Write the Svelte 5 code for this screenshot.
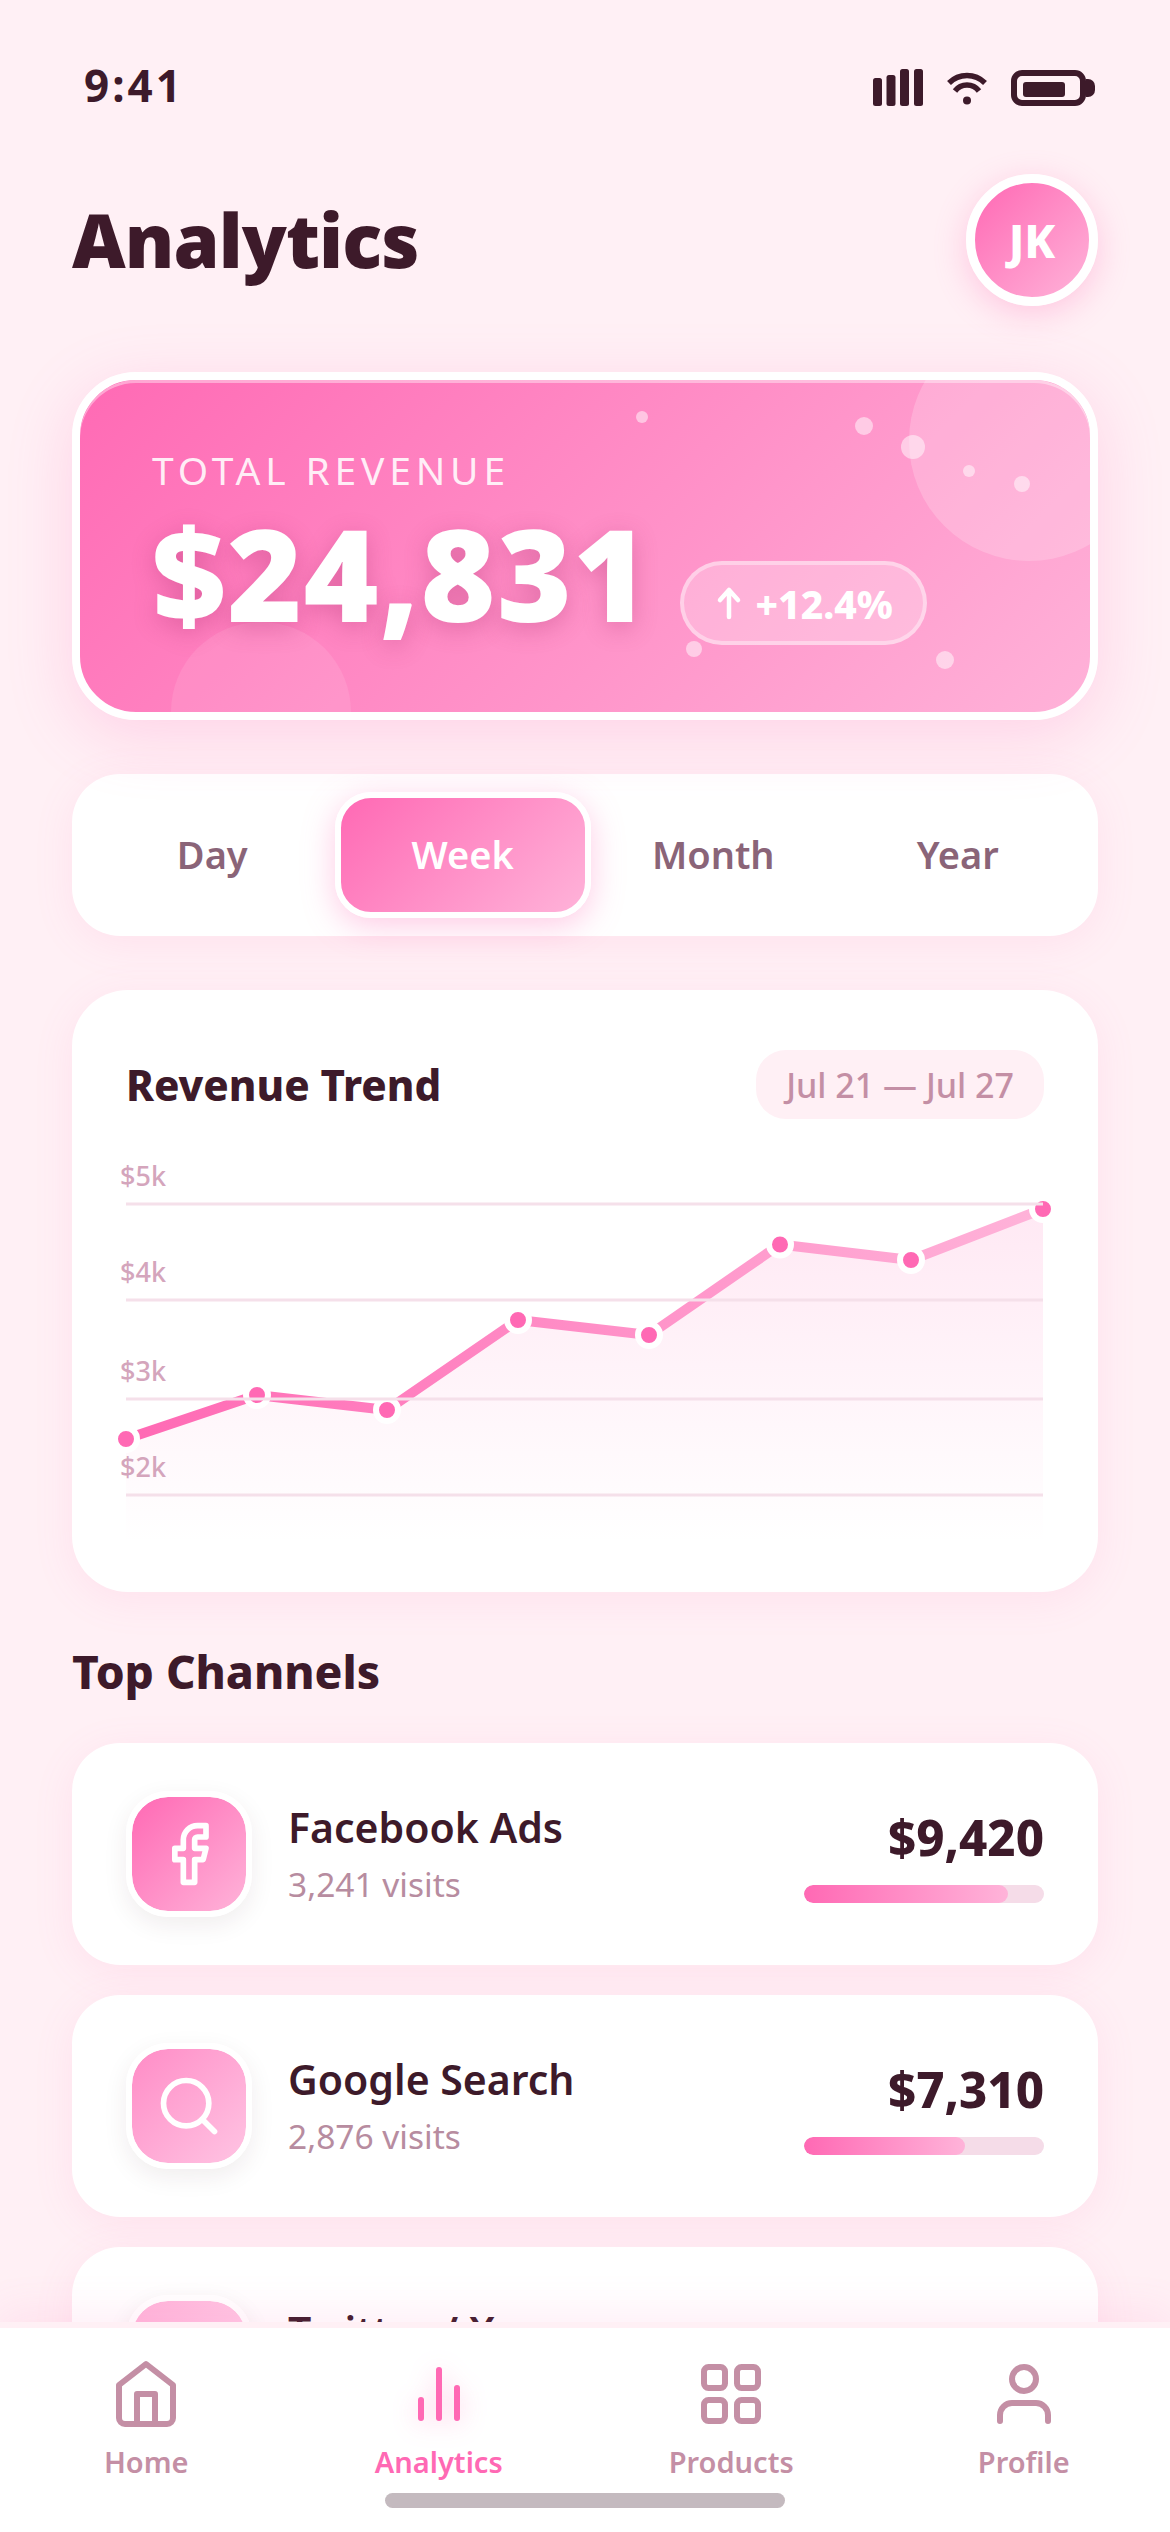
<script>
	const dots = [
		{ x: 642, y: 417, r: 6 },
		{ x: 864, y: 426, r: 9 },
		{ x: 913, y: 447, r: 12 },
		{ x: 969, y: 471, r: 6 },
		{ x: 1022, y: 484, r: 8 },
		{ x: 694, y: 649, r: 8 },
		{ x: 945, y: 660, r: 9 }
	];
	const tabs = ['Day', 'Week', 'Month', 'Year'];
	const points = [
		[0, 279],
		[131, 235],
		[261, 250],
		[392, 160],
		[523, 175],
		[654, 84.5],
		[785, 100],
		[917, 49]
	];
	const gridLines = [
		{ y: 44, label: '$5k' },
		{ y: 140, label: '$4k' },
		{ y: 239, label: '$3k' },
		{ y: 335, label: '$2k' }
	];
	const channels = [
		{ name: 'Facebook Ads', visits: '3,241 visits', amount: '$9,420', share: 85, icon: 'facebook', tone: 'tone-a' },
		{ name: 'Google Search', visits: '2,876 visits', amount: '$7,310', share: 67, icon: 'search', tone: 'tone-b' },
		{ name: 'Twitter / X', visits: '1,954 visits', amount: '$5,102', share: 48, icon: 'twitter', tone: 'tone-c' }
	];
	const navItems = ['Home', 'Analytics', 'Products', 'Profile'];

	const linePath = points.map((p) => p.join(',')).join(' ');
	const areaPath = `0,383 ${linePath} 917,383`;
</script>

<div class="screen">
	<div class="scroll">
		<div class="status">
			<span class="time">9:41</span>
			<div class="status-icons">
				<svg width="50" height="37" viewBox="0 0 50 37" fill="#3d1a2a">
					<rect x="0" y="9" width="9" height="28" rx="2.5" />
					<rect x="13.5" y="6" width="9" height="31" rx="2.5" />
					<rect x="27" y="0" width="9" height="37" rx="2.5" />
					<rect x="41" y="0" width="9" height="37" rx="2.5" />
				</svg>
				<svg width="40" height="34" viewBox="0 0 40 34" fill="none" stroke="#3d1a2a" stroke-width="5.5">
					<path d="M2 12C12 2 28 2 38 12" />
					<path d="M8 20C14 12 26 12 32 20" />
					<circle cx="20" cy="29.5" r="4" fill="#3d1a2a" stroke="none" />
				</svg>
				<svg width="84" height="36" viewBox="0 0 84 36" fill="#3d1a2a">
					<rect x="3" y="3" width="69" height="30" rx="8" fill="none" stroke="#3d1a2a" stroke-width="6" />
					<rect x="12" y="12" width="42" height="15" rx="3" />
					<path d="M75 9h2a7 7 0 0 1 7 7v4a7 7 0 0 1-7 7h-2z" />
				</svg>
			</div>
		</div>

		<header class="page-head">
			<h1>Analytics</h1>
			<div class="avatar">JK</div>
		</header>

		<section class="hero">
			<div class="blob blob-top"></div>
			<div class="blob blob-bottom"></div>
			{#each dots as d}
				<span
					class="dot"
					style="left:{d.x - 80 - d.r}px;top:{d.y - 380 - d.r}px;width:{d.r * 2}px;height:{d.r * 2}px"
				></span>
			{/each}
			<div class="hero-label">TOTAL REVENUE</div>
			<div class="hero-row">
				<span class="hero-value">$24,831</span>
				<span class="badge">
					<svg width="30" height="34" viewBox="0 0 30 34" fill="none" stroke="#fff" stroke-width="4.5" stroke-linecap="round" stroke-linejoin="round">
						<path d="M15 31V4M6 14l9-10 9 10" />
					</svg>
					+12.4%
				</span>
			</div>
		</section>

		<nav class="tabs">
			{#each tabs as tab}
				<div class="tab" class:active={tab === 'Week'}>{tab}</div>
			{/each}
		</nav>

		<section class="chart-card">
			<div class="chart-head">
				<h2>Revenue Trend</h2>
				<span class="range">Jul 21 — Jul 27</span>
			</div>
			<svg class="chart" width="918" height="383" viewBox="0 0 918 383">
				<defs>
					<linearGradient id="lineGrad" x1="0" y1="0" x2="1" y2="0">
						<stop offset="0" stop-color="#ff69b4" />
						<stop offset="1" stop-color="#ffb3d9" />
					</linearGradient>
					<linearGradient id="areaGrad" x1="0" y1="0" x2="0" y2="1">
						<stop offset="0" stop-color="#ff69b4" stop-opacity="0.15" />
						<stop offset="1" stop-color="#ff69b4" stop-opacity="0" />
					</linearGradient>
				</defs>
				<polygon points={areaPath} fill="url(#areaGrad)" />
				<polyline points={linePath} fill="none" stroke="url(#lineGrad)" stroke-width="10" stroke-linejoin="round" />
				{#each points as p}
					<circle cx={p[0]} cy={p[1]} r="11" fill="#ff69b4" stroke="#fff" stroke-width="6" />
				{/each}
				{#each gridLines as g}
					<line x1="0" x2="917" y1={g.y} y2={g.y} stroke="#f5e0ea" stroke-width="3" />
					<text x="-6" y={g.y - 18} class="axis">{g.label}</text>
				{/each}
			</svg>
		</section>

		<h2 class="section-title">Top Channels</h2>

		<div class="channels">
			{#each channels as c}
				<div class="channel">
					<div class="channel-icon {c.tone}">
						<svg width="68" height="68" viewBox="0 0 24 24" fill="none" stroke="#fff" stroke-width="2" stroke-linecap="round" stroke-linejoin="round">
							{#if c.icon === 'facebook'}
								<path d="M18 2h-3a5 5 0 0 0-5 5v3H7v4h3v8h4v-8h3l1-4h-4V7a1 1 0 0 1 1-1h3z" />
							{:else if c.icon === 'search'}
								<circle cx="11" cy="11" r="8" />
								<line x1="21" y1="21" x2="16.65" y2="16.65" />
							{:else}
								<path d="M23 3a10.9 10.9 0 0 1-3 1.5 4.5 4.5 0 0 0-8 3v1A10.7 10.7 0 0 1 3 4s-4 9 5 13a11.600 11.600 0 0 1-7 2c9 5 20 0 20-11.500 0-.3 0-.6-.1-.8A7.700 7.700 0 0 0 23 3z" />
							{/if}
						</svg>
					</div>
					<div class="channel-text">
						<div class="channel-name">{c.name}</div>
						<div class="channel-visits">{c.visits}</div>
					</div>
					<div class="channel-stats">
						<div class="channel-amount">{c.amount}</div>
						<div class="bar"><div class="bar-fill" style="width:{c.share}%"></div></div>
					</div>
				</div>
			{/each}
		</div>
	</div>

	<footer class="bottom-nav">
		{#each navItems as item}
			<div class="nav-item" class:current={item === 'Analytics'}>
				<svg width="72" height="72" viewBox="0 0 24 24" fill="none" stroke="currentColor" stroke-width="2" stroke-linecap="round" stroke-linejoin="round">
					{#if item === 'Home'}
						<path d="M3 9l9-7 9 7v11a2 2 0 0 1-2 2H5a2 2 0 0 1-2-2z" />
						<polyline points="9 22 9 12 15 12 15 22" />
					{:else if item === 'Analytics'}
						<line x1="18" y1="20" x2="18" y2="10" />
						<line x1="12" y1="20" x2="12" y2="4" />
						<line x1="6" y1="20" x2="6" y2="14" />
					{:else if item === 'Products'}
						<rect x="3" y="3" width="7" height="7" rx="1.500" />
						<rect x="14" y="3" width="7" height="7" rx="1.500" />
						<rect x="14" y="14" width="7" height="7" rx="1.500" />
						<rect x="3" y="14" width="7" height="7" rx="1.500" />
					{:else}
						<path d="M20 21v-2a4 4 0 0 0-4-4H8a4 4 0 0 0-4 4v2" />
						<circle cx="12" cy="7" r="4" />
					{/if}
				</svg>
				<span>{item}</span>
			</div>
		{/each}
		<div class="home-bar"></div>
	</footer>
</div>

<style>
	:global(body) {
		margin: 0;
		background: #fff0f5;
	}

	.screen {
		width: 1170px;
		height: 2532px;
		display: flex;
		flex-direction: column;
		overflow: hidden;
		background: #fff0f5;
		color: #3d1a2a;
		font-family: 'Noto Sans', 'Open Sans', sans-serif;
	}

	.scroll {
		flex: 1;
		min-height: 0;
		overflow: hidden;
		padding: 0 72px;
	}

	.status {
		height: 174px;
		display: flex;
		justify-content: space-between;
		align-items: flex-start;
		padding: 60px 3px 0 12px;
		box-sizing: border-box;
	}

	.time {
		font-size: 44px;
		line-height: 50px;
		font-weight: 700;
		letter-spacing: 3px;
	}

	.status-icons {
		display: flex;
		align-items: center;
		gap: 24px;
		margin-top: 9px;
	}

	.page-head {
		height: 132px;
		display: flex;
		justify-content: space-between;
		align-items: center;
	}

	h1 {
		margin: -2px 0 0;
		font-size: 74px;
		font-weight: 900;
		letter-spacing: -0.9px;
	}

	.avatar {
		width: 132px;
		height: 132px;
		box-sizing: border-box;
		border: 9px solid #fff;
		border-radius: 50%;
		background: linear-gradient(135deg, #ff69b4, #ffb3d9);
		box-shadow: 0 8px 32px rgba(255, 105, 180, 0.3);
		color: #fff;
		font-size: 46px;
		font-weight: 800;
		display: flex;
		align-items: center;
		justify-content: center;
	}

	.hero {
		position: relative;
		margin-top: 66px;
		height: 348px;
		box-sizing: border-box;
		padding: 67px 72px 0;
		border: 8px solid #fff;
		border-radius: 64px;
		overflow: hidden;
		background: linear-gradient(135deg, #ff69b4, #ffb3d9);
		background-origin: border-box;
		color: #fff;
		box-shadow: 0 16px 64px rgba(255, 105, 180, 0.22);
	}

	.hero::after {
		content: '';
		position: absolute;
		inset: 0;
		border-radius: 56px;
		box-shadow: inset 0 3px 0 rgba(255, 255, 255, 0.4);
		pointer-events: none;
	}

	.blob {
		position: absolute;
		border-radius: 50%;
		background: rgba(255, 255, 255, 0.2);
	}

	.blob-top {
		width: 240px;
		height: 240px;
		left: 829px;
		top: -59px;
	}

	.blob-bottom {
		width: 180px;
		height: 180px;
		left: 91px;
		top: 242px;
		background: rgba(255, 255, 255, 0.1);
	}

	.dot {
		position: absolute;
		border-radius: 50%;
		background: rgba(255, 255, 255, 0.5);
	}

	.hero-label {
		position: relative;
		font-size: 39px;
		line-height: 46px;
		letter-spacing: 4.8px;
		color: rgba(255, 255, 255, 0.88);
	}

	.hero-row {
		position: relative;
		display: flex;
		align-items: flex-end;
		gap: 30px;
		margin-top: 15px;
	}

	.hero-value {
		font-size: 128px;
		line-height: 130px;
		font-weight: 900;
		letter-spacing: 1.3px;
		text-shadow: 0 6px 24px rgba(160, 40, 100, 0.3);
	}

	.badge {
		display: flex;
		align-items: center;
		gap: 12px;
		height: 84px;
		box-sizing: border-box;
		padding: 0 30px;
		margin-bottom: -7px;
		border: 4px solid rgba(255, 255, 255, 0.4);
		border-radius: 42px;
		background: rgba(255, 255, 255, 0.25);
		font-size: 39px;
		font-weight: 800;
	}

	.tabs {
		margin-top: 54px;
		height: 162px;
		box-sizing: border-box;
		padding: 18px;
		display: flex;
		border-radius: 48px;
		background: #fff;
		box-shadow: 0 8px 40px rgba(255, 105, 180, 0.1);
	}

	.tab {
		flex: 1 1 0;
		display: flex;
		align-items: center;
		justify-content: center;
		padding-bottom: 3px;
		font-size: 38px;
		font-weight: 600;
		color: #8a6478;
		border-radius: 36px;
	}

	.tab.active {
		color: #fff;
		background: linear-gradient(135deg, #ff69b4, #ffb3d9);
		border: 6px solid #fff;
		box-shadow: 0 8px 32px rgba(255, 105, 180, 0.35);
	}

	.chart-card {
		margin-top: 54px;
		height: 602px;
		box-sizing: border-box;
		padding: 60px 54px 0;
		border-radius: 56px;
		background: #fff;
		box-shadow: 0 8px 40px rgba(255, 105, 180, 0.1);
	}

	.chart-head {
		height: 69px;
		display: flex;
		justify-content: space-between;
		align-items: center;
	}

	h2 {
		margin: 0;
		font-size: 42px;
		font-weight: 800;
	}

	.range {
		height: 69px;
		padding: 0 30px;
		display: flex;
		align-items: center;
		border-radius: 30px;
		background: #fff0f5;
		color: #c48fa5;
		font-size: 34px;
		font-weight: 500;
	}

	.chart {
		display: block;
		margin-top: 41px;
		overflow: visible;
	}

	.axis {
		font-size: 27px;
		font-weight: 500;
		fill: #d4a5bc;
		font-family: 'Noto Sans', 'Open Sans', sans-serif;
	}

	.section-title {
		margin-top: 47px;
		font-size: 46px;
		line-height: 64px;
	}

	.channels {
		margin-top: 40px;
		display: flex;
		flex-direction: column;
		gap: 30px;
	}

	.channel {
		height: 222px;
		flex-shrink: 0;
		box-sizing: border-box;
		padding: 0 54px;
		display: flex;
		align-items: center;
		border-radius: 48px;
		background: #fff;
		box-shadow: 0 8px 40px rgba(255, 105, 180, 0.1);
	}

	.channel-icon {
		width: 126px;
		height: 126px;
		box-sizing: border-box;
		border: 6px solid #fff;
		border-radius: 42px;
		display: flex;
		align-items: center;
		justify-content: center;
		box-shadow: 0 8px 24px rgba(61, 26, 42, 0.08);
	}

	.tone-a {
		background: linear-gradient(135deg, #ff69b4, #ffb3d9) padding-box;
	}

	.tone-b {
		background: linear-gradient(135deg, #ff8cc6, #ffc4e3) padding-box;
	}

	.tone-c {
		background: linear-gradient(135deg, #ffb3d9, #ffd6ec) padding-box;
	}

	.channel-text {
		margin-left: 36px;
		flex: 1;
		margin-top: -2px;
	}

	.channel-name {
		font-size: 41px;
		line-height: 54px;
		font-weight: 600;
	}

	.channel-visits {
		margin-top: 8px;
		font-size: 33.5px;
		line-height: 44px;
		color: #b78ca0;
	}

	.channel-stats {
		width: 240px;
		margin-top: -2px;
		display: flex;
		flex-direction: column;
		align-items: flex-end;
	}

	.channel-amount {
		font-size: 49px;
		line-height: 66px;
		font-weight: 800;
	}

	.bar {
		width: 240px;
		height: 18px;
		margin-top: 15px;
		border-radius: 9px;
		background: #f5dce8;
		overflow: hidden;
	}

	.bar-fill {
		height: 100%;
		border-radius: 9px;
		background: linear-gradient(90deg, #ff69b4, #ffb3d9);
	}

	.bottom-nav {
		position: relative;
		flex-shrink: 0;
		height: 210px;
		box-sizing: border-box;
		border-top: 6px solid #fff0f5;
		background: #fff;
		display: grid;
		grid-template-columns: repeat(4, 1fr);
		box-shadow: 0 -8px 40px rgba(255, 105, 180, 0.12);
	}

	.nav-item {
		display: flex;
		flex-direction: column;
		align-items: center;
		padding-top: 30px;
		color: #c48fa5;
	}

	.nav-item span {
		margin-top: 10px;
		font-size: 29px;
		line-height: 44px;
		font-weight: 600;
	}

	.nav-item.current {
		color: #ff69b4;
	}

	.nav-item.current svg {
		filter: drop-shadow(0 4px 12px rgba(255, 105, 180, 0.4));
	}

	.home-bar {
		position: absolute;
		left: 385px;
		bottom: 24px;
		width: 400px;
		height: 15px;
		border-radius: 8px;
		background: rgba(61, 26, 42, 0.3);
	}
</style>
